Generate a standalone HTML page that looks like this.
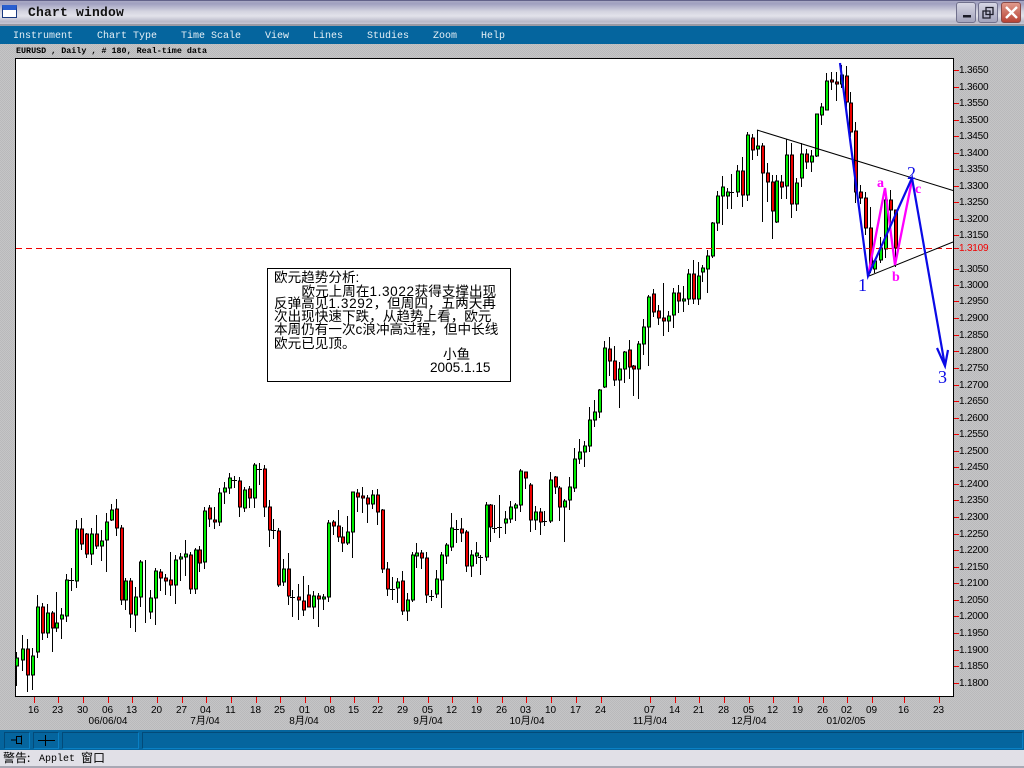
<!DOCTYPE html>
<html><head><meta charset="utf-8"><title>Chart window</title>
<style>
html,body{margin:0;padding:0;width:1024px;height:768px;overflow:hidden;background:#bfbfc1}
body{position:relative;font-family:"Liberation Sans","WenQuanYi Zen Hei",sans-serif}
div{position:absolute;white-space:pre}
#bg{left:0;top:44px;width:1024px;height:686px;background:repeating-conic-gradient(#c5c5c6 0 25%,#b9b9bb 0 50%) 0 0/2px 2px}
#title{left:0;top:0;width:1024px;height:26px;background:linear-gradient(#a8a8c4 0,#a0a0c0 12%,#d4d4e0 45%,#e2e2ea 65%,#b8b8c8 90%,#c8c8d4 100%);border-top:1px solid #62628a;box-sizing:border-box;border-bottom:2px solid #9a9aa4}
#tt{left:28px;top:4px;font:bold 13px/18px "Liberation Mono",monospace;letter-spacing:.2px;color:#111}
#ic{left:2px;top:5px;width:13px;height:7px;background:#fff;border:1px solid #1a3a80;border-top:5px solid #2a5fd0}
.wb{top:2px;width:20px;height:21px;box-sizing:border-box;border:1px solid #70708c;border-radius:3px;background:linear-gradient(#d6d6e4,#a4a4bc)}
#menu{left:0;top:26px;width:1024px;height:18px;background:#05659e}
.m{top:28px;font:10px/17px "Liberation Mono",monospace;color:#e6f0f6}
#sub{left:16px;top:45px;font:8.4px/13px "Liberation Mono",monospace;color:#000;font-weight:bold}
#tb{left:0;top:730px;width:1024px;height:20px;background:#05659e}
.bt{top:732px;height:15px;box-sizing:content-box;border:1px solid #0a80c4;border-top-color:#034a78;border-left-color:#034a78}
#st{left:0;top:750px;width:1024px;height:16px;background:#e1e0e7}
#stl{left:0;top:766px;width:1024px;height:2px;background:#a8a8b4}
.s{top:750px;font:12px/16px "WenQuanYi Zen Hei","Noto Sans CJK SC",sans-serif;color:#000}
.sl{top:752px;font:10px/16px "Liberation Mono",monospace;color:#000}
#box{left:267px;top:268px;width:242px;height:112px;background:#fff;border:1px solid #000;box-sizing:content-box}
.l{left:274px;font:13.6px/16px "Liberation Sans","WenQuanYi Zen Hei","Noto Sans CJK SC",sans-serif;color:#000}
.l i{font-style:normal;letter-spacing:.6px}
svg{position:absolute;left:0;top:0}
</style></head><body>
<div id="bg"></div>
<div id="title"></div>
<div id="ic"></div>
<div id="tt">Chart window</div>
<div class="wb" style="left:956px"></div>
<div class="wb" style="left:978px"></div>
<div class="wb" style="left:1001px;border-color:#8a4a48;background:linear-gradient(#e09a8c,#b84436)"></div>
<div id="menu"></div>
<div class="m" style="left:13px">Instrument</div>
<div class="m" style="left:97px">Chart Type</div>
<div class="m" style="left:181px">Time Scale</div>
<div class="m" style="left:265px">View</div>
<div class="m" style="left:313px">Lines</div>
<div class="m" style="left:367px">Studies</div>
<div class="m" style="left:433px">Zoom</div>
<div class="m" style="left:481px">Help</div>
<div id="sub">EURUSD , Daily , # 180, Real-time data</div>
<div id="tb"></div>
<div class="bt" style="left:4px;width:24px"></div>
<div class="bt" style="left:33px;width:24px"></div>
<div class="bt" style="left:62px;width:75px"></div>
<div class="bt" style="left:142px;width:879px"></div>
<div id="st"></div><div id="stl"></div>
<div class="s" style="left:3px">警告:</div>
<div class="sl" style="left:39px">Applet</div>
<div class="s" style="left:81px">窗口</div>

<svg width="1024" height="768" viewBox="0 0 1024 768">
<g fill="none">
<path d="M963 15h8v2.5h-8z" fill="#1c1c28"/>
<path d="M986 7.5h7v7h-7zM983 11h7v7h-7z" fill="none" stroke="#1c1c28" stroke-width="1.3"/>
<path d="M1006 7l11 11M1017 7l-11 11" stroke="#fff" stroke-width="2.4"/>
<rect x="15.5" y="58.5" width="938" height="638" fill="#fff" stroke="#000"/>
<path d="M11 740h5M16.500 736.500h5v7h-5zM21.500 735.500v9" stroke="#000" fill="none" stroke-width="1"/>
<path d="M38 740.5h17M45.5 735v11" stroke="#000"/>
</g>
<g shape-rendering="crispEdges">
<path fill="none" stroke="#000" d="M16.5 652V686M22.5 635V671M27.5 639V692M32.5 648V690M37.5 595V658M42.5 603V640M47.5 604V638M52.5 611V652M56.5 592V632M61.5 608V639M66.5 574V622M71.5 568V591M76.5 520V588M81.5 518V550M86.5 533V558M91.5 528V565M96.5 515V549M101.5 530V561M106.5 513V572M111.5 504V521M116.5 499V536M121.5 525V605M125.5 578V610M130.5 578V628M135.5 587V632M140.5 560V607M145.5 560V623M150.5 590V619M155.5 568V625M160.5 569V591M165.5 574V595M170.5 552V596M175.5 555V604M180.5 553V581M185.5 540V576M190.5 552V594M195.5 548V594M199.5 546V572M204.5 507V569M209.5 505V527M214.5 507V529M219.5 488V526M224.5 482V504M229.5 473V494M234.5 476V488M239.5 477V517M244.5 487V512M249.5 486V508M254.5 463V508M259.5 463V485M264.5 465V517M269.5 500V547M273.5 519V539M278.5 528V587M283.5 559V586M288.5 553V605M292.5 590V617M298.5 584V620M303.5 576V616M308.5 585V607M313.5 591V619M318.5 593V627M323.5 594V610M328.5 520V602M333.5 520V535M338.5 510V542M342.5 527V552M347.5 516V545M352.5 492V558M357.5 489V512M362.5 487V513M367.5 495V523M372.5 490V509M377.5 489V525M382.5 509V573M387.5 562V596M392.5 577V600M397.5 578V603M402.5 571V615M407.5 593V621M412.5 552V602M416.5 543V568M421.5 550V569M426.5 552V603M431.5 590V601M436.5 570V598M441.5 552V608M446.5 543V564M451.5 513V551M456.5 520V543M461.5 518V542M466.5 530V572M471.5 550V577M476.5 542V564M480.5 555V575M486.5 502V561M490.5 504V542M494.5 505V533M499.5 495V538M505.5 511V534M510.5 501V523M515.5 503V521M520.5 469V512M525.5 472V489M530.5 483V532M535.5 506V530M540.5 508V535M544.5 511V526M550.5 472V523M555.5 476V494M559.5 486V521M564.5 499V542M569.5 477V510M574.5 448V492M579.5 439V464M584.5 441V467M589.5 407V452M594.5 400V427M599.5 389V418M604.5 341V388M609.5 337V376M614.5 346V386M619.5 362V408M624.5 351V383M629.5 340V379M633.5 365V396M638.5 341V399M643.5 319V355M648.5 295V366M653.5 289V317M658.5 305V325M663.5 283V336M668.5 311V332M673.5 288V328M678.5 285V313M683.5 286V312M688.5 269V305M693.5 260V304M698.5 262V305M702.5 265V282M707.5 250V293M712.5 222V258M717.5 191V231M722.5 176V225M727.5 188V209M731.5 174V209M737.5 165V197M742.5 157V207M747.5 132V201M752.5 134V160M757.5 130V156M762.5 143V222M767.5 163V202M772.5 175V239M776.5 175V223M781.5 175V199M786.5 139V199M791.5 143V218M796.5 178V211M801.5 143V187M806.5 149V169M811.5 150V172M816.5 114V157M821.5 103V125M826.5 73V110M831.5 72V90M836.5 72V101M841.5 65V88M846.5 66V115M850.5 92V137M855.5 122V203M860.5 185V204M865.5 192V235M870.5 207V273M874.5 260V273M880.5 237V263M885.5 189V258M890.5 190V225M895.5 210V267M69 580.5h5M232 480.5h5M257 469.5h5M271 530.5h5M290 597.5h5M390 589.5h5M429 596.5h5M478 557.5h5M492 528.5h5M497 527.5h5M454 529.5h5M542 521.5h5M729 192.5h5"/>
<path fill="#00ee00" stroke="#000" d="M15.5 658h3V666h-3zM21.5 649h3V660h-3zM31.5 656h3V675h-3zM36.5 607h3V652h-3zM46.5 613h3V633h-3zM55.5 623h3V628h-3zM60.5 615h3V619h-3zM65.5 580h3V616h-3zM75.5 529h3V581h-3zM90.5 534h3V554h-3zM100.5 541h3V546h-3zM105.5 522h3V540h-3zM110.5 510h3V520h-3zM124.5 581h3V600h-3zM134.5 597h3V615h-3zM139.5 562h3V597h-3zM149.5 598h3V612h-3zM154.5 571h3V598h-3zM174.5 560h3V585h-3zM179.5 557h3V559h-3zM184.5 554h3V557h-3zM194.5 550h3V589h-3zM203.5 511h3V562h-3zM218.5 493h3V522h-3zM223.5 488h3V492h-3zM228.5 478h3V488h-3zM243.5 490h3V508h-3zM253.5 465h3V498h-3zM282.5 569h3V582h-3zM312.5 596h3V607h-3zM322.5 597h3V599h-3zM327.5 523h3V597h-3zM346.5 532h3V543h-3zM351.5 492h3V532h-3zM371.5 495h3V504h-3zM396.5 582h3V588h-3zM406.5 600h3V611h-3zM411.5 555h3V600h-3zM415.5 553h3V556h-3zM435.5 579h3V594h-3zM440.5 555h3V580h-3zM445.5 545h3V556h-3zM450.5 528h3V547h-3zM470.5 555h3V566h-3zM475.5 553h3V556h-3zM485.5 505h3V557h-3zM504.5 519h3V523h-3zM509.5 507h3V519h-3zM514.5 505h3V508h-3zM519.5 471h3V505h-3zM534.5 512h3V520h-3zM549.5 480h3V521h-3zM563.5 501h3V507h-3zM568.5 487h3V500h-3zM573.5 459h3V488h-3zM578.5 452h3V459h-3zM583.5 446h3V452h-3zM588.5 420h3V446h-3zM593.5 412h3V420h-3zM598.5 390h3V412h-3zM603.5 348h3V387h-3zM618.5 369h3V380h-3zM623.5 352h3V369h-3zM637.5 344h3V369h-3zM642.5 327h3V344h-3zM647.5 297h3V327h-3zM667.5 316h3V321h-3zM672.5 293h3V315h-3zM682.5 299h3V301h-3zM687.5 274h3V299h-3zM697.5 276h3V299h-3zM701.5 268h3V272h-3zM706.5 256h3V269h-3zM711.5 223h3V256h-3zM716.5 196h3V223h-3zM721.5 187h3V196h-3zM726.5 192h3V196h-3zM736.5 171h3V192h-3zM746.5 135h3V195h-3zM756.5 146h3V149h-3zM775.5 181h3V222h-3zM785.5 155h3V186h-3zM795.5 183h3V204h-3zM800.5 154h3V178h-3zM810.5 156h3V162h-3zM815.5 114h3V156h-3zM820.5 107h3V115h-3zM825.5 81h3V110h-3zM840.5 75h3V84h-3zM873.5 261h3V269h-3zM879.5 248h3V260h-3zM884.5 200h3V249h-3z"/>
<path fill="#ee0000" stroke="#000" d="M26.5 649h3V675h-3zM41.5 607h3V633h-3zM51.5 613h3V628h-3zM80.5 529h3V544h-3zM85.5 534h3V554h-3zM95.5 534h3V546h-3zM115.5 509h3V528h-3zM120.5 528h3V600h-3zM129.5 581h3V614h-3zM159.5 572h3V578h-3zM164.5 578h3V581h-3zM169.5 580h3V585h-3zM189.5 555h3V589h-3zM198.5 550h3V563h-3zM208.5 508h3V519h-3zM213.5 520h3V522h-3zM238.5 481h3V507h-3zM248.5 489h3V498h-3zM263.5 469h3V507h-3zM268.5 507h3V530h-3zM277.5 531h3V585h-3zM287.5 569h3V596h-3zM297.5 597h3V600h-3zM302.5 601h3V610h-3zM307.5 595h3V607h-3zM317.5 596h3V599h-3zM332.5 522h3V526h-3zM337.5 526h3V537h-3zM341.5 537h3V543h-3zM356.5 493h3V497h-3zM361.5 496h3V498h-3zM366.5 498h3V504h-3zM376.5 495h3V512h-3zM381.5 510h3V569h-3zM386.5 569h3V589h-3zM401.5 581h3V611h-3zM420.5 553h3V558h-3zM425.5 558h3V595h-3zM460.5 529h3V533h-3zM465.5 532h3V566h-3zM489.5 505h3V527h-3zM524.5 472h3V478h-3zM529.5 485h3V520h-3zM539.5 512h3V522h-3zM554.5 477h3V487h-3zM558.5 488h3V507h-3zM608.5 349h3V361h-3zM613.5 361h3V380h-3zM628.5 350h3V367h-3zM632.5 366h3V369h-3zM652.5 294h3V312h-3zM657.5 311h3V318h-3zM662.5 318h3V321h-3zM677.5 293h3V301h-3zM692.5 274h3V299h-3zM741.5 171h3V195h-3zM751.5 138h3V150h-3zM761.5 146h3V173h-3zM766.5 173h3V182h-3zM771.5 182h3V211h-3zM780.5 182h3V187h-3zM790.5 155h3V204h-3zM805.5 154h3V162h-3zM830.5 80h3V82h-3zM835.5 82h3V84h-3zM845.5 76h3V102h-3zM849.5 103h3V132h-3zM854.5 131h3V192h-3zM859.5 192h3V198h-3zM864.5 198h3V228h-3zM869.5 228h3V265h-3zM889.5 200h3V210h-3zM894.5 210h3V248h-3z"/>
<path fill="none" stroke="#f00000" d="M16 248.5H953" stroke-dasharray="6 4"/>
<path fill="none" stroke="#f00000" d="M954 70.5h5M954 87.5h5M954 103.5h5M954 120.5h5M954 136.5h5M954 153.5h5M954 169.5h5M954 186.5h5M954 202.5h5M954 219.5h5M954 235.5h5M954 248.5h5M954 269.5h5M954 285.5h5M954 301.5h5M954 318.5h5M954 335.5h5M954 351.5h5M954 368.5h5M954 385.5h5M954 401.5h5M954 418.5h5M954 434.5h5M954 451.5h5M954 467.5h5M954 484.5h5M954 500.5h5M954 517.5h5M954 534.5h5M954 550.5h5M954 567.5h5M954 583.5h5M954 600.5h5M954 616.5h5M954 633.5h5M954 650.5h5M954 666.5h5M954 683.5h5"/>
<path fill="none" stroke="#f00000" d="M34.5 697v6M58.5 697v6M83.5 697v6M108.5 697v6M132.5 697v6M157.5 697v6M182.5 697v6M206.5 697v6M231.5 697v6M256.5 697v6M280.5 697v6M305.5 697v6M330.5 697v6M354.5 697v6M378.5 697v6M403.5 697v6M428.5 697v6M452.5 697v6M477.5 697v6M502.5 697v6M526.5 697v6M551.5 697v6M576.5 697v6M601.5 697v6M650.5 697v6M675.5 697v6M699.5 697v6M724.5 697v6M749.5 697v6M773.5 697v6M798.5 697v6M823.5 697v6M847.5 697v6M872.5 697v6M904.5 697v6M939.5 697v6"/>
</g>
<path fill="none" stroke="#000" d="M757 130L953 190.500M869 276L953 242"/>
<path fill="none" stroke="#ff00ff" stroke-width="2.300" d="M868 276L885 188L895 265L912 180"/>
<path fill="none" stroke="#0a0ae6" stroke-width="2.200" d="M840 63L868 276L912 178L945 366M937 348L945 366L948 350"/>
<g font-family="Liberation Serif,serif">
<text x="858" y="291" font-size="18" fill="#0a0ae6">1</text>
<text x="907" y="179" font-size="18" fill="#0a0ae6">2</text>
<text x="938" y="383" font-size="18" fill="#0a0ae6">3</text>
<text x="877" y="187" font-size="14" font-weight="bold" fill="#ff00ff">a</text>
<text x="892" y="281" font-size="14" font-weight="bold" fill="#ff00ff">b</text>
<text x="915" y="193" font-size="14" font-weight="bold" fill="#ff00ff">c</text>
</g>
<g font-family="Liberation Sans,sans-serif" font-size="10" letter-spacing="-.2" fill="#000" transform="translate(0,-1)">
<text x="959" y="74">1.3650</text><text x="959" y="91">1.3600</text><text x="959" y="107">1.3550</text><text x="959" y="124">1.3500</text><text x="959" y="140">1.3450</text><text x="959" y="157">1.3400</text><text x="959" y="173">1.3350</text><text x="959" y="190">1.3300</text><text x="959" y="206">1.3250</text><text x="959" y="223">1.3200</text><text x="959" y="239">1.3150</text><text x="959" y="252" fill="#f00000">1.3109</text><text x="959" y="273">1.3050</text><text x="959" y="289">1.3000</text><text x="959" y="305">1.2950</text><text x="959" y="322">1.2900</text><text x="959" y="339">1.2850</text><text x="959" y="355">1.2800</text><text x="959" y="372">1.2750</text><text x="959" y="389">1.2700</text><text x="959" y="405">1.2650</text><text x="959" y="422">1.2600</text><text x="959" y="438">1.2550</text><text x="959" y="455">1.2500</text><text x="959" y="471">1.2450</text><text x="959" y="488">1.2400</text><text x="959" y="504">1.2350</text><text x="959" y="521">1.2300</text><text x="959" y="538">1.2250</text><text x="959" y="554">1.2200</text><text x="959" y="571">1.2150</text><text x="959" y="587">1.2100</text><text x="959" y="604">1.2050</text><text x="959" y="620">1.2000</text><text x="959" y="637">1.1950</text><text x="959" y="654">1.1900</text><text x="959" y="670">1.1850</text><text x="959" y="687">1.1800</text>
</g>
<g font-family="Liberation Sans,sans-serif" font-size="10" fill="#000" text-anchor="middle">
<text x="33.500" y="713">16</text><text x="57.500" y="713">23</text><text x="82.500" y="713">30</text><text x="107.500" y="713">06</text><text x="131.500" y="713">13</text><text x="156.500" y="713">20</text><text x="181.500" y="713">27</text><text x="205.500" y="713">04</text><text x="230.500" y="713">11</text><text x="255.500" y="713">18</text><text x="279.500" y="713">25</text><text x="304.500" y="713">01</text><text x="329.500" y="713">08</text><text x="353.500" y="713">15</text><text x="377.500" y="713">22</text><text x="402.500" y="713">29</text><text x="427.500" y="713">05</text><text x="451.500" y="713">12</text><text x="476.500" y="713">19</text><text x="501.500" y="713">26</text><text x="525.500" y="713">03</text><text x="550.500" y="713">10</text><text x="575.500" y="713">17</text><text x="600.500" y="713">24</text><text x="649.500" y="713">07</text><text x="674.500" y="713">14</text><text x="698.500" y="713">21</text><text x="723.500" y="713">28</text><text x="748.500" y="713">05</text><text x="772.500" y="713">12</text><text x="797.500" y="713">19</text><text x="822.500" y="713">26</text><text x="846.500" y="713">02</text><text x="871.500" y="713">09</text><text x="903.500" y="713">16</text><text x="938.500" y="713">23</text>
</g>
<g font-family="Liberation Sans,WenQuanYi Zen Hei,Noto Sans CJK SC,sans-serif" font-size="10" fill="#000" text-anchor="middle">
<text x="108" y="724">06/06/04</text><text x="205" y="724">7月/04</text><text x="304" y="724">8月/04</text><text x="428" y="724">9月/04</text><text x="527" y="724">10月/04</text><text x="650" y="724">11月/04</text><text x="749" y="724">12月/04</text><text x="846" y="724">01/02/05</text>
</g>
</svg>

<div id="box"></div>
<div class="l" style="top:270px">欧元趋势分析:</div>
<div class="l" style="top:284px;left:301.500px">欧元上周在<i>1.3022</i>获得支撑出现</div>
<div class="l" style="top:296px">反弹高见<i>1.3292</i>&#xFF0C;但周四&#xFF0C;五两天再</div>
<div class="l" style="top:309px">次出现快速下跌&#xFF0C;从趋势上看&#xFF0C;欧元</div>
<div class="l" style="top:322px">本周仍有一次c浪冲高过程&#xFF0C;但中长线</div>
<div class="l" style="top:336px">欧元已见顶。</div>
<div class="l" style="top:347px;left:443px">小鱼</div>
<div class="l" style="top:360px;left:430px">2005.1.15</div>
</body></html>
